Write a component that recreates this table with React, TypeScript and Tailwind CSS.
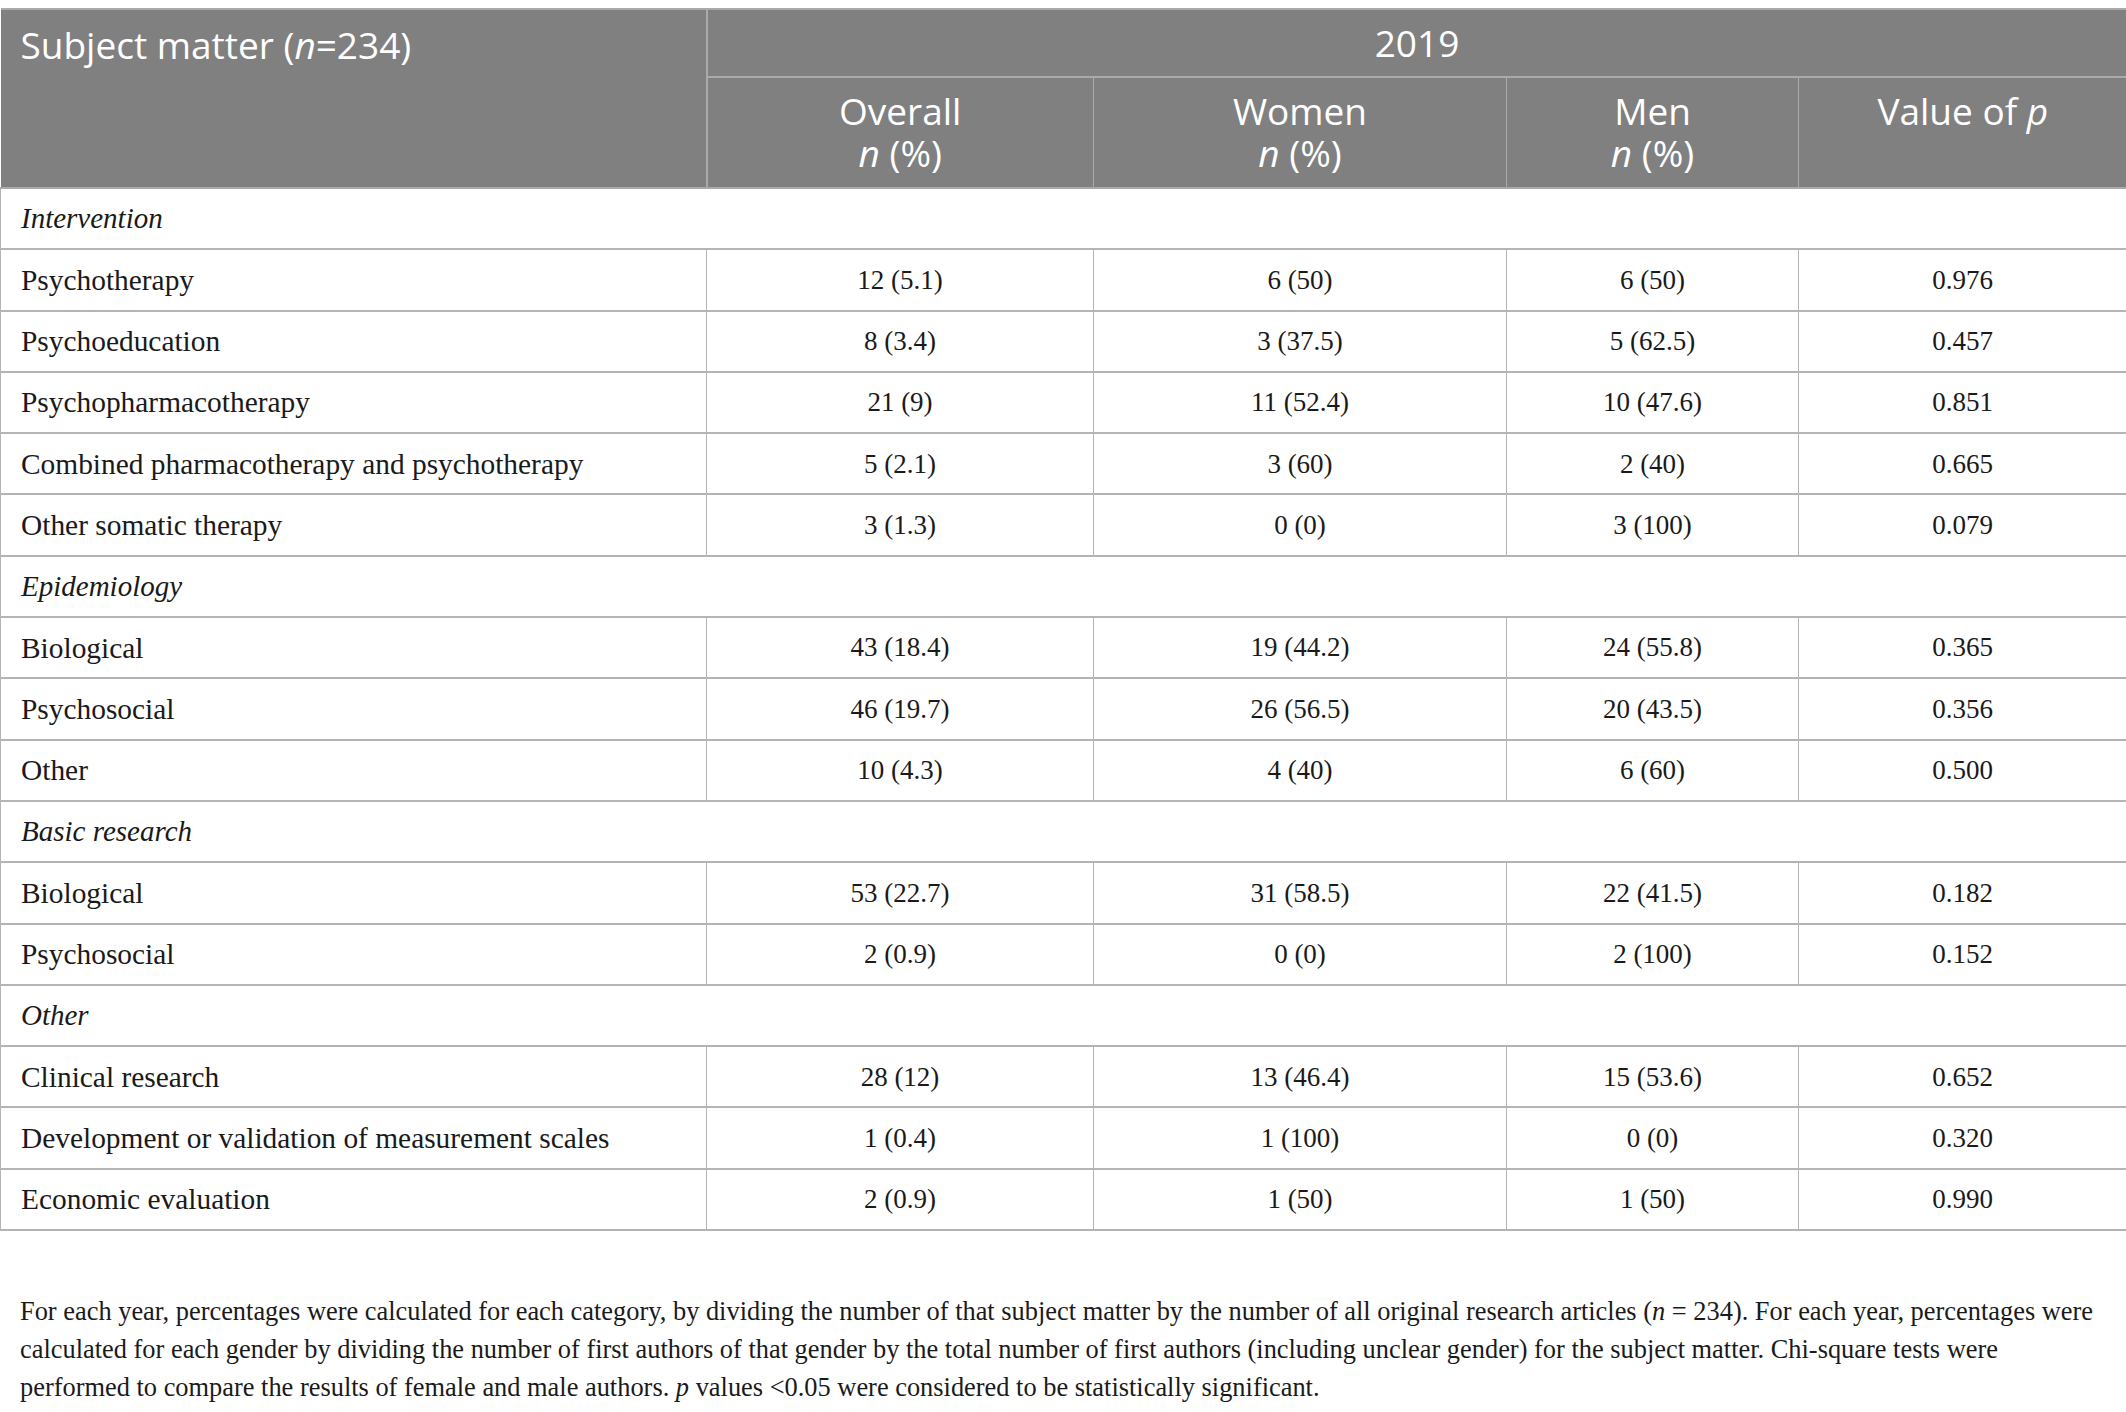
import React from "react"

type Row = { label: string; section?: boolean; vals?: string[] }

const rows: Row[] = [
  { label: "Intervention", section: true },
  { label: "Psychotherapy", vals: ["12 (5.1)", "6 (50)", "6 (50)", "0.976"] },
  { label: "Psychoeducation", vals: ["8 (3.4)", "3 (37.5)", "5 (62.5)", "0.457"] },
  { label: "Psychopharmacotherapy", vals: ["21 (9)", "11 (52.4)", "10 (47.6)", "0.851"] },
  { label: "Combined pharmacotherapy and psychotherapy", vals: ["5 (2.1)", "3 (60)", "2 (40)", "0.665"] },
  { label: "Other somatic therapy", vals: ["3 (1.3)", "0 (0)", "3 (100)", "0.079"] },
  { label: "Epidemiology", section: true },
  { label: "Biological", vals: ["43 (18.4)", "19 (44.2)", "24 (55.8)", "0.365"] },
  { label: "Psychosocial", vals: ["46 (19.7)", "26 (56.5)", "20 (43.5)", "0.356"] },
  { label: "Other", vals: ["10 (4.3)", "4 (40)", "6 (60)", "0.500"] },
  { label: "Basic research", section: true },
  { label: "Biological", vals: ["53 (22.7)", "31 (58.5)", "22 (41.5)", "0.182"] },
  { label: "Psychosocial", vals: ["2 (0.9)", "0 (0)", "2 (100)", "0.152"] },
  { label: "Other", section: true },
  { label: "Clinical research", vals: ["28 (12)", "13 (46.4)", "15 (53.6)", "0.652"] },
  { label: "Development or validation of measurement scales", vals: ["1 (0.4)", "1 (100)", "0 (0)", "0.320"] },
  { label: "Economic evaluation", vals: ["2 (0.9)", "1 (50)", "1 (50)", "0.990"] },
]

const sans = "font-['Open_Sans',sans-serif]"
const serif = "font-['Liberation_Serif',serif]"

export default function App() {
  return (
    <div className="w-[2126px] min-h-[1412px] bg-white pt-[8px] text-[#1a1a1a]">
      <table className="w-full border-collapse table-fixed">
        <colgroup>
          <col className="w-[706px]" />
          <col className="w-[387px]" />
          <col className="w-[413px]" />
          <col className="w-[292px]" />
          <col className="w-[328px]" />
        </colgroup>
        <thead className={`${sans} text-white text-[37px] font-normal`}>
          <tr className="h-[68px] bg-[#7f807f] leading-[42px]">
            <th
              rowSpan={2}
              className="border-2 border-[#a9aaa9] border-l-0 align-top text-left font-normal px-[20px] pt-[14px]"
            >
              Subject matter (<i>n</i>=234)
            </th>
            <th colSpan={4} className="border-2 border-[#a9aaa9] border-r-0 font-normal text-center">
              2019
            </th>
          </tr>
          <tr className="h-[111px] bg-[#7f807f] leading-[42px]">
            <th className="border border-[#a9aaa9] border-b-2 align-top font-normal pt-[12px]">
              Overall
              <br />
              <i>n</i> (%)
            </th>
            <th className="border border-[#a9aaa9] border-b-2 align-top font-normal pt-[12px]">
              Women
              <br />
              <i>n</i> (%)
            </th>
            <th className="border border-[#a9aaa9] border-b-2 align-top font-normal pt-[12px]">
              Men
              <br />
              <i>n</i> (%)
            </th>
            <th className="border border-[#a9aaa9] border-b-2 border-r-0 align-top font-normal pt-[12px]">
              Value of <i>p</i>
            </th>
          </tr>
        </thead>
        <tbody className={`${serif} text-[27px]`}>
          {rows.map((r, i) =>
            r.section ? (
              <tr key={i} className="h-[61.3px]">
                <td colSpan={5} className="border-y-2 border-x border-[#b4b4b4] px-[20px] italic text-[29px]">
                  {r.label}
                </td>
              </tr>
            ) : (
              <tr key={i} className="h-[61.3px]">
                <td className="border-y-2 border-l border-r border-[#b4b4b4] px-[20px] text-[29.4px]">{r.label}</td>
                {r.vals!.map((v, j) => (
                  <td key={j} className="border-y-2 border-x border-[#b4b4b4] text-center">
                    {v}
                  </td>
                ))}
              </tr>
            )
          )}
        </tbody>
      </table>

      <div className={`${serif} text-[26.4px] leading-[38px] px-[20px] pt-[61px]`}>
        <div className="whitespace-nowrap">
          For each year, percentages were calculated for each category, by dividing the number of that subject matter by the number of all original research articles (<i>n</i> = 234). For each year, percentages were
        </div>
        <div className="whitespace-nowrap">
          calculated for each gender by dividing the number of first authors of that gender by the total number of first authors (including unclear gender) for the subject matter. Chi-square tests were
        </div>
        <div className="whitespace-nowrap">
          performed to compare the results of female and male authors. <i>p</i> values &lt;0.05 were considered to be statistically significant.
        </div>
      </div>
    </div>
  )
}
